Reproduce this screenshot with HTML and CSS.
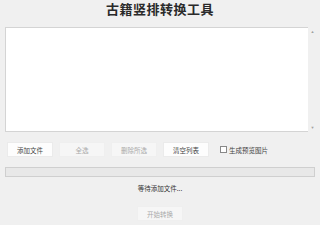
FILE: index.html
```html
<!DOCTYPE html>
<html lang="zh">
<head>
    <meta charset="UTF-8">
    <title>古籍竖排转换工具</title>
    <link rel="stylesheet" href="styles.css">
</head>
<body>
    <div class="window">
        <!-- 标题 -->
        <h1 class="title">古籍竖排转换工具</h1>

        <!-- 文件列表 -->
        <div class="list-wrap">
            <div class="listbox"></div>
            <div class="scrollbar">
                <span class="arrow">▲</span>
                <span class="arrow">▼</span>
            </div>
        </div>

        <!-- 按钮 -->
        <div class="toolbar">
            <button class="btn">添加文件</button>
            <button class="btn" disabled>全选</button>
            <button class="btn" disabled>删除所选</button>
            <button class="btn">清空列表</button>
            <label class="check"><span class="box"></span>生成预览图片</label>
        </div>

        <div class="progress"></div>

        <div class="status">等待添加文件...</div>

        <div class="start-row">
            <button class="btn" disabled>开始转换</button>
        </div>
    </div>
</body>
</html>
```

FILE: styles.css
```css
/* 通用 */
body {
    margin: 0;
    background-color: #f0f0f0;
    font-family: "Liberation Sans", "Noto Sans CJK SC", sans-serif;
    color: #222;
}

.window {
    width: 320px;
    height: 225px;
    display: flex;
    flex-direction: column;
}

/* 标题 */
.title {
    margin: 0;
    height: 27px;
    line-height: 20px;
    font-family: "Liberation Serif", "Noto Sans CJK SC", serif;
    font-size: 13px;
    font-weight: bold;
    text-align: center;
    color: #2a2a2a;
    letter-spacing: 0.5px;
}

/* 列表 */
.list-wrap {
    display: flex;
    height: 105px;
    margin: 0 3px 0 5px;
}

.listbox {
    flex: 1;
    background-color: #fff;
    border: 1px solid #d4d4d4;
    border-right: none;
}

.scrollbar {
    width: 9px;
    background-color: #f0f0f0;
    display: flex;
    flex-direction: column;
    justify-content: space-between;
    align-items: center;
    padding: 2px 0;
}

.arrow {
    font-size: 4px;
    color: #a0a0a0;
    line-height: 5px;
}

/* 按钮 */
.toolbar {
    display: flex;
    align-items: center;
    gap: 6px;
    margin: 10px 0 0 7px;
    height: 15px;
}

.btn {
    width: 46px;
    height: 15px;
    padding: 0;
    border: 1px solid #ebebeb;
    background-color: #fdfdfd;
    font-family: "Noto Sans CJK SC", sans-serif;
    font-size: 6.5px;
    color: #444;
}

.btn:disabled {
    background-color: #f6f6f6;
    border-color: #efefef;
    color: #aaa;
}

.check {
    display: flex;
    align-items: center;
    margin-left: 5px;
    font-family: "Noto Sans CJK SC", sans-serif;
    font-size: 6.5px;
    color: #444;
}

.box {
    width: 5px;
    height: 5px;
    border: 1px solid #888;
    background-color: #fff;
    margin-right: 2px;
}

/* 进度条 */
.progress {
    height: 8px;
    margin: 10px 5px 0 5px;
    background-color: #e8e8e8;
    border: 1px solid #cfcfcf;
}

.status {
    margin-top: 6px;
    height: 10px;
    line-height: 10px;
    text-align: center;
    font-family: "Noto Sans CJK SC", sans-serif;
    font-size: 6.5px;
    color: #333;
}

.start-row {
    display: flex;
    justify-content: center;
    margin-top: 13px;
}
```
